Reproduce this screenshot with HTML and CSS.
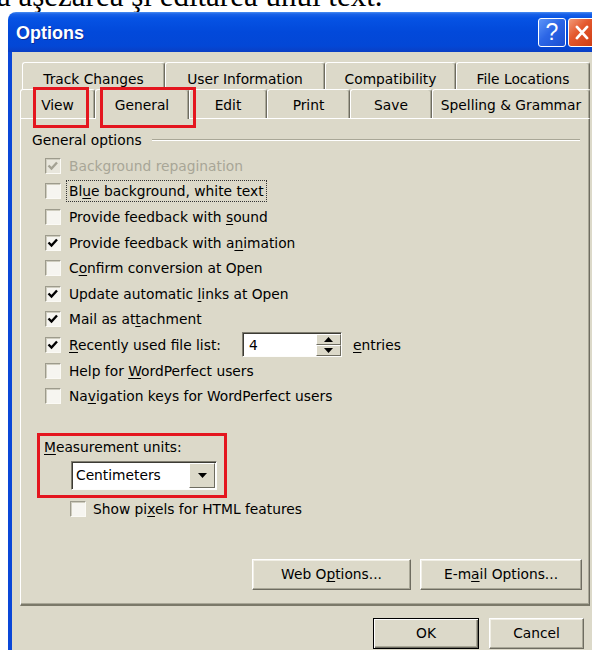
FILE: index.html
```html
<!DOCTYPE html>
<html lang="ro">
<head>
<meta charset="utf-8">
<title>Options</title>
<link rel="stylesheet" href="styles.css">
</head>
<body>
<p class="caption"><span>a aşezarea şi editarea unui text.</span></p>

<div class="window">
  <div class="titlebar">
    <span class="title">Options</span>
    <div class="caption-buttons">
      <span class="cbtn help">?</span>
      <span class="cbtn close">
        <svg viewBox="0 0 28 29" width="28" height="29" aria-hidden="true">
          <path d="M8.5 8.5 L19.5 20.5 M19.5 8.5 L8.5 20.5" stroke="#fff" stroke-width="3" stroke-linecap="round"/>
        </svg>
      </span>
    </div>
  </div>

  <div class="client">
    <div class="tabs">
      <div class="tabrow back">
        <span class="tab t-track">Track Changes</span>
        <span class="tab t-user">User Information</span>
        <span class="tab t-compat">Compatibility</span>
        <span class="tab t-files">File Locations</span>
      </div>
      <div class="tabrow front">
        <span class="tab t-view marked">View</span>
        <span class="tab t-general selected marked">General</span>
        <span class="tab t-edit">Edit</span>
        <span class="tab t-print">Print</span>
        <span class="tab t-save">Save</span>
        <span class="tab t-spell">Spelling &amp; Grammar</span>
      </div>
    </div>

    <div class="panel">
      <div class="group-head">
        <span class="group-label">General options</span>
        <span class="group-rule"></span>
      </div>

      <div class="options">
        <div class="opt disabled">
          <span class="cb"><svg viewBox="0 0 14 14" width="14" height="14"><path d="M2.5 6.5 L5.5 9.5 L11 3.5" fill="none" stroke="#a4a294" stroke-width="2.4"/></svg></span>
          <span class="lbl">Background repagination</span>
        </div>
        <div class="opt">
          <span class="cb"></span>
          <span class="lbl focus">Bl<u>u</u>e background, white text</span>
        </div>
        <div class="opt">
          <span class="cb"></span>
          <span class="lbl">Provide feedback with <u>s</u>ound</span>
        </div>
        <div class="opt">
          <span class="cb"><svg viewBox="0 0 14 14" width="14" height="14"><path d="M2.5 6.5 L5.5 9.5 L11 3.5" fill="none" stroke="#000" stroke-width="2.4"/></svg></span>
          <span class="lbl">Provide feedback with a<u>n</u>imation</span>
        </div>
        <div class="opt">
          <span class="cb"></span>
          <span class="lbl">C<u>o</u>nfirm conversion at Open</span>
        </div>
        <div class="opt">
          <span class="cb"><svg viewBox="0 0 14 14" width="14" height="14"><path d="M2.5 6.5 L5.5 9.5 L11 3.5" fill="none" stroke="#000" stroke-width="2.4"/></svg></span>
          <span class="lbl">Update automatic <u>l</u>inks at Open</span>
        </div>
        <div class="opt">
          <span class="cb"><svg viewBox="0 0 14 14" width="14" height="14"><path d="M2.5 6.5 L5.5 9.5 L11 3.5" fill="none" stroke="#000" stroke-width="2.4"/></svg></span>
          <span class="lbl">Mail as at<u>t</u>achment</span>
        </div>
        <div class="opt">
          <span class="cb"><svg viewBox="0 0 14 14" width="14" height="14"><path d="M2.5 6.5 L5.5 9.5 L11 3.5" fill="none" stroke="#000" stroke-width="2.4"/></svg></span>
          <span class="lbl recent"><u>R</u>ecently used file list:</span>
          <span class="spin">
            <span class="spin-field">4</span>
            <span class="spin-buttons">
              <span class="spin-btn"><svg viewBox="0 0 9 5" width="9" height="5"><path d="M0 5 L4.5 0 L9 5 Z" fill="#000"/></svg></span>
              <span class="spin-btn"><svg viewBox="0 0 9 5" width="9" height="5"><path d="M0 0 L9 0 L4.5 5 Z" fill="#000"/></svg></span>
            </span>
          </span>
          <span class="lbl entries"><u>e</u>ntries</span>
        </div>
        <div class="opt">
          <span class="cb"></span>
          <span class="lbl">Help for <u>W</u>ordPerfect users</span>
        </div>
        <div class="opt">
          <span class="cb"></span>
          <span class="lbl">Na<u>v</u>igation keys for WordPerfect users</span>
        </div>
      </div>

      <div class="measure">
        <div class="measure-label"><u>M</u>easurement units:</div>
        <div class="combo">
          <span class="combo-field">Centimeters</span>
          <span class="combo-btn"><svg viewBox="0 0 9 5" width="9" height="5"><path d="M0 0 L9 0 L4.5 5 Z" fill="#000"/></svg></span>
        </div>
      </div>

      <div class="opt pixels">
        <span class="cb"></span>
        <span class="lbl">Show pi<u>x</u>els for HTML features</span>
      </div>

      <div class="actions">
        <span class="btn web">Web O<u>p</u>tions...</span>
        <span class="btn mail">E-m<u>a</u>il Options...</span>
      </div>
    </div>

    <div class="footer">
      <span class="btn ok default">OK</span>
      <span class="btn cancel">Cancel</span>
    </div>
  </div>
</div>
</body>
</html>
```

FILE: styles.css
```css
* {
  box-sizing: border-box;
}

html,
body {
  margin: 0;
  padding: 0;
}

body {
  width: 592px;
  height: 650px;
  overflow: hidden;
  background: #fff;
  font-family: "DejaVu Sans", Verdana, sans-serif;
  font-size: 13.8px;
  color: #000;
}

u {
  text-decoration-thickness: 1px;
  text-underline-offset: 2px;
}

/* line of document text above the dialog, partly cut off */
.caption {
  margin: 0;
  height: 12px;
  overflow: hidden;
  font-family: "Liberation Serif", "Times New Roman", serif;
  font-size: 31px;
  line-height: 31px;
  white-space: nowrap;
}

.caption span {
  display: block;
  margin-top: -20px;
  margin-left: -3px;
}

/* dialog window */
.window {
  margin-left: 8px;
  width: 596px;
}

.titlebar {
  height: 40px;
  display: flex;
  justify-content: space-between;
  padding-left: 8px;
  padding-right: 8px;
  border-radius: 8px 8px 0 0;
  background: linear-gradient(#4a8ff2 0, #1a62e8 2px, #0653e4 6px, #0249da 50%, #0347d6 85%, #0a3ec4 100%);
}

.title {
  align-self: center;
  padding-top: 2px;
  color: #fff;
  font-family: "Liberation Sans", Arial, sans-serif;
  font-weight: bold;
  font-size: 18px;
  text-shadow: 1px 1px 0 #0c2b98;
}

.caption-buttons {
  display: flex;
  gap: 2px;
  padding-top: 6px;
}

.cbtn {
  width: 28px;
  height: 29px;
  border: 1px solid #fff;
  border-radius: 3px;
  display: flex;
  align-items: center;
  justify-content: center;
}

.help {
  background: linear-gradient(135deg, #5d95f7 0%, #2c66e6 45%, #1a4fd2 100%);
  color: #fff;
  font-family: "Liberation Sans", Arial, sans-serif;
  font-size: 23px;
  line-height: 1;
}

.close {
  background: linear-gradient(135deg, #f19a78 0%, #e4582d 40%, #cc3b12 100%);
}

.close svg {
  display: block;
}

.client {
  background: #dcd9c9;
  border-left: 4px solid #0a47d8;
  padding: 10px 10px 40px 8px;
}

/* tab strip, two rows */
.tabrow {
  display: flex;
}

.tabrow.back {
  margin-left: 2px;
  height: 27px;
}

.tabrow.front {
  height: 29px;
}

.tab {
  position: relative;
  display: flex;
  justify-content: center;
  line-height: 20px;
  white-space: nowrap;
  border-top: 1px solid #fff;
  border-left: 1px solid #fff;
  border-right: 1px solid #6e6c60;
  box-shadow: inset -1px 0 0 #a9a797;
  border-radius: 3px 3px 0 0;
  background: #dcd9c9;
}

.back .tab {
  padding-top: 6px;
}

.front .tab {
  padding-top: 5px;
}

.t-track { width: 143px; }
.t-user { width: 160px; }
.t-compat { width: 131px; }
.t-files { width: 134px; }

.t-view { width: 75px; }
.t-general { width: 94px; }
.t-edit { width: 78px; }
.t-print { width: 83px; }
.t-save { width: 82px; }
.t-spell { width: 158px; }

.tab.selected {
  z-index: 1;
  height: 30px;
}

/* red annotation frames drawn over the View and General tabs */
.tab.marked::after {
  content: "";
  position: absolute;
  top: -3px;
  height: 35px;
  border: 3px solid #e4161f;
}

.t-view.marked::after {
  left: 12px;
  width: 50px;
}

.t-general.marked::after {
  left: 4px;
  width: 90px;
}

/* tab page */
.panel {
  width: 570px;
  border-top: 1px solid #fff;
  border-left: 1px solid #fff;
  border-right: 1px solid #6e6c60;
  border-bottom: 2px solid #7b7969;
  box-shadow: inset -1px -1px 0 #a9a797;
  padding-bottom: 14px;
}

.group-head {
  display: flex;
  align-items: center;
  height: 20px;
  margin-top: 11px;
  padding-left: 11px;
  padding-right: 9px;
}

.group-rule {
  flex: 1;
  margin-left: 10px;
  border-top: 1px solid #a9a797;
  border-bottom: 1px solid #fff;
}

.options {
  margin-top: 3px;
}

.opt {
  display: flex;
  align-items: center;
  height: 25.6px;
  padding-left: 24px;
  white-space: nowrap;
}

.cb {
  width: 16px;
  height: 16px;
  flex: none;
  border: 1px solid;
  border-color: #9d9b8c #fbfaf5 #fbfaf5 #9d9b8c;
  box-shadow: inset 1px 1px 0 #cfcdbf;
  background: #f6f5f0;
  display: flex;
  align-items: center;
  justify-content: center;
}

.cb svg {
  display: block;
}

.lbl {
  margin-left: 8px;
  line-height: 20px;
}

.disabled .lbl {
  color: #a8a697;
}

.disabled .cb {
  background: #e8e6dc;
}

.lbl.focus {
  margin-left: 6px;
  padding: 0 2px;
  outline: 1px dotted #333;
  outline-offset: 0;
}

.lbl.recent {
  width: 173px;
}

/* spinner for the recent files count */
.spin {
  display: flex;
  width: 100px;
  height: 25px;
  border: 1px solid;
  border-color: #7f7d70 #fdfdfb #fdfdfb #7f7d70;
  box-shadow: inset 1px 1px 0 #3c3b34;
  background: #fff;
  padding: 1px 0 0 1px;
}

.spin-field {
  flex: 1;
  padding-left: 5px;
  line-height: 22px;
}

.spin-buttons {
  width: 25px;
  display: flex;
  flex-direction: column;
}

.spin-btn {
  flex: 1;
  display: flex;
  align-items: center;
  justify-content: center;
  background: #dcd9c9;
  border: 1px solid;
  border-color: #fff #6e6c60 #6e6c60 #fff;
}

.spin-btn svg {
  display: block;
}

.lbl.entries {
  margin-left: 11px;
}

/* measurement units block, framed in red */
.measure {
  margin-top: 24px;
  margin-left: 16px;
  width: 190px;
  height: 65px;
  border: 3px solid #e4161f;
  padding: 1px 0 0 4px;
}

.measure-label {
  line-height: 20px;
  white-space: nowrap;
}

.combo {
  margin-top: 4px;
  margin-left: 27px;
  width: 146px;
  height: 29px;
  display: flex;
  border: 1px solid;
  border-color: #7f7d70 #fdfdfb #fdfdfb #7f7d70;
  box-shadow: inset 1px 1px 0 #3c3b34;
  background: #fff;
  padding: 1px 1px 1px 1px;
}

.combo-field {
  flex: 1;
  padding-left: 3px;
  line-height: 25px;
}

.combo-btn {
  width: 26px;
  display: flex;
  align-items: center;
  justify-content: center;
  background: #dcd9c9;
  border: 1px solid;
  border-color: #fff #6e6c60 #6e6c60 #fff;
}

.combo-btn svg {
  display: block;
}

.opt.pixels {
  margin-top: 1px;
  height: 20px;
  padding-left: 49px;
}

.opt.pixels .lbl {
  margin-left: 7px;
}

/* push buttons */
.actions {
  margin-top: 40px;
  display: flex;
  justify-content: flex-end;
  gap: 9px;
  padding-right: 7px;
}

.btn {
  height: 31px;
  display: flex;
  align-items: center;
  justify-content: center;
  white-space: nowrap;
  border: 1px solid;
  border-color: #fff #6e6c60 #6e6c60 #fff;
  box-shadow: inset -1px -1px 0 #a9a797, inset 1px 1px 0 #f1efe6;
  background: #dcd9c9;
}

.btn.web { width: 159px; }
.btn.mail { width: 162px; }

.footer {
  display: flex;
  justify-content: flex-end;
  gap: 10px;
  padding-top: 12px;
  padding-right: 10px;
}

.btn.ok { width: 106px; }
.btn.cancel { width: 95px; }

.btn.default {
  border: 1px solid #000;
  box-shadow: inset 1px 1px 0 #fff, inset -1px -1px 0 #6e6c60, inset -2px -2px 0 #a9a797;
}
```
